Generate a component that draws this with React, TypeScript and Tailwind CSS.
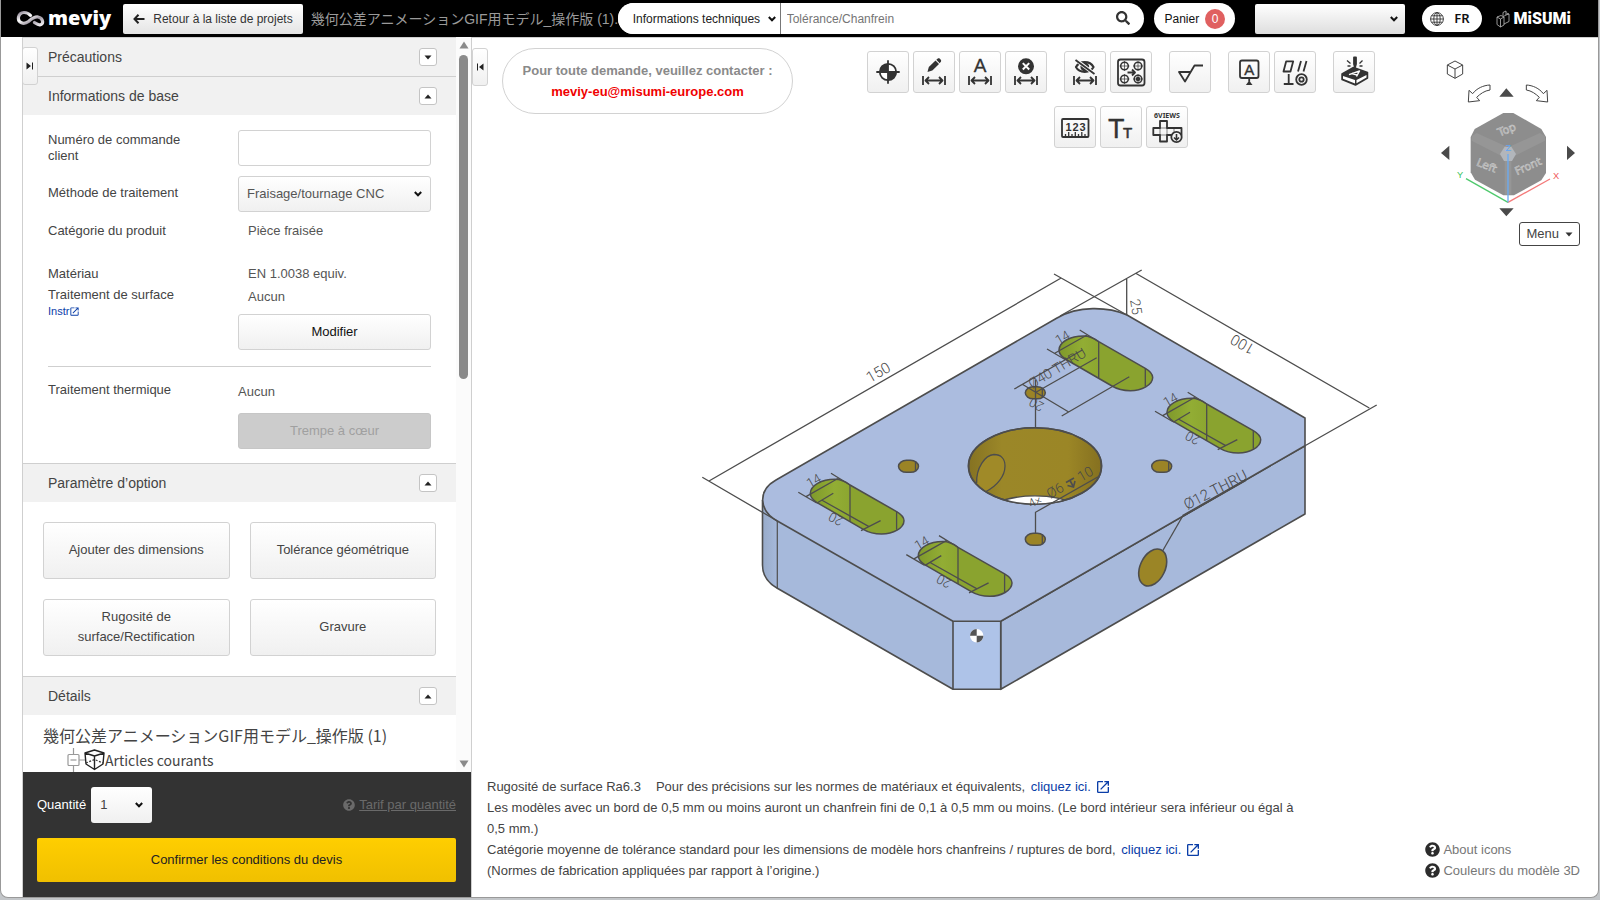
import type { ReactNode } from "react";
import { FaQuestionCircle, FaSearch } from "react-icons/fa";
import { MdOpenInNew } from "react-icons/md";

const MODEL_NAME = "幾何公差アニメーションGIF用モデル_操作版 (1)";

const softButton =
  "rounded-[3px] border border-[#d2d2d2] bg-gradient-to-b from-white to-[#f0f0f0]";

function Chevron({ className }: { className: string }) {
  return (
    <svg
      viewBox="0 0 8 6"
      className={`pointer-events-none col-start-1 row-start-1 h-1.5 w-2 self-center justify-self-end ${className}`}
      fill="none"
      stroke="#111"
      strokeWidth="2"
    >
      <path d="M0.800 1L4 4.300L7.200 1" />
    </svg>
  );
}

function Logo() {
  return (
    <a href="#" aria-label="meviy" className="flex items-center gap-0.5 text-white">
      <svg viewBox="0 0 30 20" className="h-5 w-[30px]" fill="none">
        <defs>
          <linearGradient id="ribbon" x1="0" y1="0" x2="1" y2="1">
            <stop offset="0" stopColor="#8d8593" />
            <stop offset="0.35" stopColor="#ffffff" />
            <stop offset="0.65" stopColor="#a29ba6" />
            <stop offset="1" stopColor="#f4f1f5" />
          </linearGradient>
        </defs>
        <path
          d="M14.500 6.500C11 2.500 4 2 2.500 8C1.500 14 8 16 12.500 12.500C16 9.500 18.500 7.500 22 8C27.500 9 28 15.500 24 15.800C21.500 16 20 14.500 18.500 13.500"
          stroke="url(#ribbon)"
          strokeWidth="3.200"
          strokeLinecap="round"
        />
      </svg>
      <span className="pb-0.5 font-['Open_Sans',sans-serif] text-[20px] leading-7 font-extrabold">meviy</span>
    </a>
  );
}

function MisumiLogo() {
  return (
    <a href="#" aria-label="MiSUMi" className="flex items-center gap-1 text-white">
      <svg viewBox="0 0 14 18" className="h-[18px] w-3.5" fill="none" stroke="#bbb" strokeWidth="0.8">
        <path d="M1 7L5 5.500L8 7V15L4.500 17L1 14.500ZM1 7L4.500 9V17M4.500 9L8 7M7 6V2.500L10 1V5L13 4V11.500L8 14M10 5L7.500 6.500M13 4L10.500 3" />
      </svg>
      <span className="font-[Roboto,sans-serif] text-base leading-5 font-black">MiSUMi</span>
    </a>
  );
}

function Header() {
  return (
    <header className="flex h-[37px] shrink-0 items-center bg-black pr-[27px] pl-[15px]">
      <Logo />
      <button className="ml-3 flex h-[30px] shrink-0 items-center gap-2 rounded-[2px] bg-gradient-to-b from-white to-[#e4e4e4] px-2.5 text-xs text-[#333]">
        <svg viewBox="0 0 12 10" className="h-2.5 w-3" fill="none" stroke="#222" strokeWidth="2">
          <path d="M5.500 0.800L1.500 5L5.500 9.200M1.500 5H11.500" />
        </svg>
        Retour à la liste de projets
      </button>
      <span className="ml-2 w-[307px] shrink-0 overflow-hidden text-sm whitespace-nowrap text-[#9a9a9a]">
        {MODEL_NAME}.
      </span>
      <form className="flex h-[31px] min-w-0 flex-1 items-stretch overflow-hidden rounded-full bg-white">
        <div className="grid w-[163px] shrink-0">
          <select
            aria-label="Catégorie de recherche"
            className="col-start-1 row-start-1 appearance-none border-r border-[#777] bg-white pl-[15px] text-xs text-[#222]"
          >
            <option>Informations techniques</option>
          </select>
          <Chevron className="mr-[5px]" />
        </div>
        <input
          aria-label="Recherche"
          placeholder="Tolérance/Chanfrein"
          className="min-w-0 flex-1 px-1.5 text-xs placeholder:text-[#757575]"
        />
        <button type="button" aria-label="Rechercher" className="px-3.5 pb-0.5">
          <FaSearch className="size-3.5 text-[#333]" />
        </button>
      </form>
      <button className="ml-2.5 flex h-[31px] items-center gap-1.5 rounded-full bg-white px-2.5 text-xs text-[#111]">
        Panier
        <span className="grid size-5 place-items-center rounded-full bg-[#e06060] text-xs text-white">0</span>
      </button>
      <div className="ml-5 grid h-[30px] w-[150px]">
        <select
          aria-label="Compte"
          className="col-start-1 row-start-1 appearance-none rounded-[2px] bg-gradient-to-b from-white to-[#dedede] px-2 text-xs text-[#111]"
        >
          <option> </option>
        </select>
        <Chevron className="mr-[7px]" />
      </div>
      <button className="ml-[17px] flex h-[27px] items-center gap-2.5 rounded-full bg-white px-2 pr-3 font-['Noto_Sans',sans-serif] text-[13px] font-semibold text-[#111]">
        <svg viewBox="0 0 14 14" className="size-3.5" fill="none" stroke="#333" strokeWidth="0.9">
          <circle cx="7" cy="7" r="6.400" />
          <ellipse cx="7" cy="7" rx="3.200" ry="6.400" />
          <path d="M7 0.500V13.500M0.500 7H13.500M1.500 3.800H12.500M1.500 10.200H12.500" />
        </svg>
        FR
      </button>
      <span className="ml-3.5">
        <MisumiLogo />
      </span>
    </header>
  );
}

function SectionHeader({ title, open }: { title: string; open: boolean }) {
  return (
    <div className="flex h-[39px] items-center justify-between border-t border-[#cfcfcf] bg-[#f1f1f1] pr-[19px] pl-[25px]">
      <h2 className="text-sm text-[#444]">{title}</h2>
      <button
        aria-label={title}
        aria-expanded={open}
        className="grid size-[18px] place-items-center rounded-[3px] border border-[#c4c4c4] bg-white"
      >
        <svg viewBox="0 0 8 5" className="h-[5px] w-2" fill="#222">
          <path d={open ? "M0.500 4.500L4 0.500L7.500 4.500Z" : "M0.500 0.500L4 4.500L7.500 0.500Z"} />
        </svg>
      </button>
    </div>
  );
}

function OptionButton({ children }: { children: ReactNode }) {
  return (
    <button className={`${softButton} h-[57px] px-6 pb-0.5 text-[13px] leading-5 text-[#444]`}>{children}</button>
  );
}

function BasicInfo() {
  return (
    <div className="px-[25px] pt-[15px] pb-[14px] text-[13px] leading-4 text-[#444]">
      <div className="grid grid-cols-[190px_1fr]">
        <label htmlFor="order-number" className="max-w-[150px] pt-0.5">
          Numéro de commande client
        </label>
        <input
          id="order-number"
          className="h-9 w-full rounded-[3px] border border-[#d2d2d2] bg-white px-2"
        />
        <label htmlFor="method" className="pt-[19px]">
          Méthode de traitement
        </label>
        <div className="mt-[10px] grid h-9">
          <select
            id="method"
            className={`${softButton} col-start-1 row-start-1 appearance-none px-2 text-[#555]`}
          >
            <option>Fraisage/tournage CNC</option>
          </select>
          <Chevron className="mr-[9px]" />
        </div>
        <span className="pt-[11px]">Catégorie du produit</span>
        <span className="pt-[11px] pl-[10px] text-[#555]">Pièce fraisée</span>
        <div className="pt-[27px]">
          <p>Matériau</p>
          <p className="pt-[5px]">Traitement de surface</p>
          <a href="#" className="flex items-center text-[11px] text-[#0a3ea8]">
            Instr
            <MdOpenInNew className="size-[11px] stroke-current" />
          </a>
        </div>
        <div className="pt-[27px] text-[#555]">
          <p className="pl-[10px]">EN 1.0038 equiv.</p>
          <p className="pt-[7px] pl-[10px]">Aucun</p>
          <button className={`${softButton} mt-[9px] h-9 w-full text-[#111]`}>Modifier</button>
        </div>
      </div>
      <hr className="mt-4 border-[#cfcfcf]" />
      <div className="grid grid-cols-[190px_1fr] pt-[15px]">
        <span>Traitement thermique</span>
        <div className="pt-0.5 text-[#555]">
          <p>Aucun</p>
          <button
            disabled
            className="mt-[13px] h-9 w-full rounded-[3px] border border-[#c6c6c6] bg-[#ccc] text-[#a0a0a0]"
          >
            Trempe à cœur
          </button>
        </div>
      </div>
    </div>
  );
}

function Scrollbar() {
  return (
    <div className="flex w-[15px] shrink-0 flex-col items-center bg-[#fbfbfb] py-1" aria-hidden="true">
      <svg viewBox="0 0 10 8" className="h-2 w-2.5" fill="#8a8a8a">
        <path d="M5 0.500L9.500 7.500H0.500Z" />
      </svg>
      <div className="mt-1.5 h-[44.500%] w-[9px] rounded-full bg-[#8a8a8a]" />
      <svg viewBox="0 0 10 8" className="mt-auto h-2 w-2.5" fill="#8a8a8a">
        <path d="M5 7.500L9.500 0.500H0.500Z" />
      </svg>
    </div>
  );
}

function Sidebar() {
  return (
    <aside className="relative ml-[21px] flex w-[450px] shrink-0 flex-col border-x border-[#cfcfcf]">
      <button
        aria-label="Déplier le panneau"
        className={`${softButton} absolute top-[10px] left-[-1px] z-10 grid h-[38px] w-4 place-items-center`}
      >
        <svg viewBox="0 0 8 8" className="size-2" fill="#222">
          <path d="M0.500 0.500L5 4L0.500 7.500ZM6 0.500H7V7.500H6Z" />
        </svg>
      </button>
      <div className="flex min-h-0 flex-1">
        <div className="min-w-0 flex-1 overflow-hidden">
          <SectionHeader title="Précautions" open={false} />
          <SectionHeader title="Informations de base" open />
          <BasicInfo />
          <SectionHeader title="Paramètre d’option" open />
          <div className="grid grid-cols-2 gap-5 px-5 py-5">
            <OptionButton>Ajouter des dimensions</OptionButton>
            <OptionButton>Tolérance géométrique</OptionButton>
            <OptionButton>Rugosité de surface/Rectification</OptionButton>
            <OptionButton>Gravure</OptionButton>
          </div>
          <SectionHeader title="Détails" open />
          <div className="px-5 pt-2 font-['Noto_Sans_CJK_JP',sans-serif] text-[#444]">
            <p className="text-base leading-6 whitespace-nowrap">{MODEL_NAME}</p>
            <p className="flex items-start pt-px pl-6 text-sm leading-6">
              <svg viewBox="0 0 38 24" className="h-6 w-[38px]" fill="none" stroke="#999" strokeWidth="1.200">
                <path d="M6.500 0V6M6.500 18V24M12 12H18" />
                <rect x="1" y="6.500" width="11" height="11" rx="1" />
                <path d="M3.500 12H9.500" />
                <path
                  d="M18 5L27.500 2L37 5L36 16L27.500 21.500L19 16ZM18 5L27.500 8L37 5M27.500 8V21"
                  stroke="#222"
                  strokeWidth="1.400"
                  strokeLinejoin="round"
                />
                <path d="M19 15L27.500 11.500L36 15" stroke="#333" strokeDasharray="2 1.500" />
              </svg>
              Articles courants
            </p>
          </div>
        </div>
        <Scrollbar />
      </div>
      <div className="flex flex-col gap-[15px] bg-[#333] py-[15px] pr-[15px] pl-[14px]">
        <div className="flex items-center text-[13px]">
          <label htmlFor="quantity" className="text-white">
            Quantité
          </label>
          <div className="ml-[5px] grid h-9 w-[61px]">
            <select
              id="quantity"
              className="col-start-1 row-start-1 appearance-none rounded-[3px] bg-gradient-to-b from-white to-[#f0f0f0] px-[9px] text-[#444]"
            >
              <option>1</option>
            </select>
            <Chevron className="mr-[9px]" />
          </div>
          <a href="#" className="ml-auto flex items-center gap-1 text-[#6a6a6a]">
            <FaQuestionCircle className="size-3" />
            <span className="underline">Tarif par quantité</span>
          </a>
        </div>
        <button className="h-11 rounded-[2px] bg-gradient-to-b from-[#ffce00] to-[#f0c000] text-[13px] text-[#222]">
          Confirmer les conditions du devis
        </button>
      </div>
    </aside>
  );
}

function ToolButton({ label, children }: { label: string; children: ReactNode }) {
  return (
    <button aria-label={label} className={`${softButton} size-[42px]`}>
      <svg
        viewBox="0.500 0.500 40 40"
        className="size-10"
        fill="none"
        stroke="#333"
        strokeWidth="1.800"
        strokeLinejoin="round"
      >
        {children}
      </svg>
    </button>
  );
}

function Span() {
  return <path d="M9.500 24.500V33.500M31.500 24.500V33.500M11.500 29H29.500M15.500 25.500L12 29L15.500 32.500M25.500 25.500L29 29L25.500 32.500" />;
}

function Toolbar() {
  return (
    <div className="flex flex-1 flex-col items-center gap-[13px] pt-[13px] pl-2">
      <div className="flex gap-[17px]">
        <div className="flex gap-1">
          <ToolButton label="Origine">
            <circle cx="20.500" cy="20.500" r="8.200" fill="#fff" />
            <path d="M20.500 8.800V32.200M8.800 20.500H32.200" />
            <path d="M20.500 20.500V12.300A8.200 8.200 0 0 0 12.300 20.500ZM20.500 20.500V28.700A8.200 8.200 0 0 0 28.700 20.500Z" fill="#333" stroke="none" />
          </ToolButton>
          <ToolButton label="Modifier la cote">
            <path d="M14 20.500L15.300 15.500L22 9L25.500 12.500L18.800 19Z" fill="#333" stroke="none" />
            <path d="M22.800 8.200L24.300 7C25.800 6 28.300 8.500 27.500 10L26.200 11.700Z" fill="#333" stroke="none" />
            <Span />
          </ToolButton>
          <ToolButton label="Texte de cote">
            <text x="20.500" y="20.500" textAnchor="middle" className="text-[19px]" fill="#333" strokeWidth="0.300">
              A
            </text>
            <Span />
          </ToolButton>
          <ToolButton label="Supprimer la cote">
            <circle cx="20.500" cy="14.800" r="8" fill="#333" stroke="none" />
            <path d="M17.300 11.600L23.700 18M23.700 11.600L17.300 18" stroke="#fff" strokeWidth="2" />
            <Span />
          </ToolButton>
        </div>
        <div className="flex gap-1">
          <ToolButton label="Masquer les cotes">
            <path d="M11.500 15.500C15 9 25.500 9 29 15.500C25.500 22 15 22 11.500 15.500Z" strokeWidth="2.200" />
            <circle cx="20.300" cy="15.300" r="3.500" fill="#333" />
            <path d="M11.500 8.500L30 22.500" stroke="#f8f8f8" strokeWidth="3.500" />
            <path d="M11 8.500L30 22.500" />
            <Span />
          </ToolButton>
          <ToolButton label="Regrouper les trous">
            <rect x="7.500" y="8" width="26.500" height="26" rx="2.500" />
            <g strokeWidth="1.500">
              <circle cx="14" cy="14.500" r="3.800" />
              <circle cx="27.500" cy="14.500" r="3.800" />
              <circle cx="14" cy="27.500" r="3.800" />
              <circle cx="27.500" cy="27.500" r="3.800" />
              <circle cx="27.500" cy="27.500" r="1.500" fill="#333" />
            </g>
            <path
              d="M9 14.500H19M14 9.500V19.500M22.500 14.500H32.500M27.500 9.500V19.500M9 27.500H19M14 22.500V32.500M22.500 27.500H32.500M27.500 22.500V32.500"
              strokeWidth="0.700"
            />
            <path d="M17 21H24M21.500 18L24.500 21L21.500 24" />
          </ToolButton>
        </div>
        <ToolButton label="Rugosité">
          <path d="M20.500 20.500H9.500L15.500 30L25 14H33.500" />
        </ToolButton>
        <div className="flex gap-1">
          <ToolButton label="Référence">
            <rect x="11.500" y="9" width="18.500" height="17.500" rx="2" />
            <text x="20.800" y="23.300" textAnchor="middle" className="text-[15px]" fill="#333" strokeWidth="0.400">
              A
            </text>
            <path d="M20.700 26.500V30" />
            <path d="M20.700 29L24 33.500H17.400Z" fill="#333" stroke="none" />
          </ToolButton>
          <ToolButton label="Tolérance géométrique">
            <path d="M9 20L11.700 9.800H18.700L16 20ZM23.500 20L26.500 9.500M29 20L32 9.500M9.300 32.500H19M14.200 32.500V22.500" />
            <circle cx="27" cy="28" r="5.300" />
            <circle cx="27" cy="28" r="2.200" />
          </ToolButton>
        </div>
        <ToolButton label="Gravure">
          <path d="M8.500 22.500L20 16L34 21V26.500L22 33.500L8.500 28Z" fill="#333" strokeWidth="1.500" />
          <path d="M9.500 24.500L21.500 28.500V32L9.500 27.300Z" fill="#fff" stroke="none" />
          <path d="M23 28.500L33 23.500V26L23 31.800Z" fill="#fff" stroke="none" />
          <path d="M15.500 23.200L26 19.500L23 25M18.500 22L23.500 23.500" stroke="#fff" strokeWidth="1.400" />
          <path d="M20.500 6V12.500L21.500 16L22.500 12.500V6Z" fill="#333" />
          <path d="M13.500 9L17 12M14 14.500H17M29 9L26 12M29 14.500H26" strokeWidth="1.300" />
        </ToolButton>
      </div>
      <div className="flex gap-1">
        <ToolButton label="Mesurer">
          <rect x="7.500" y="12.500" width="26.500" height="18" rx="1" />
          <g textAnchor="middle" className="text-[11px] font-bold" fill="#333" stroke="none">
            <text x="14" y="24">1</text>
            <text x="21" y="24">2</text>
            <text x="28" y="24">3</text>
          </g>
          <path d="M11 30V27.500M14.200 30V25.500M17.500 30V27.500M20.800 30V25.500M24 30V27.500M27.300 30V25.500M30.500 30V27.500" strokeWidth="1.300" />
        </ToolButton>
        <ToolButton label="Taille du texte">
          <text x="7.500" y="31" className="text-[27px]" fill="#333" strokeWidth="0.300">
            T
          </text>
          <text x="22.500" y="31" className="text-[15px]" fill="#333" strokeWidth="0.600">
            T
          </text>
        </ToolButton>
        <ToolButton label="Six vues">
          <text x="20.500" y="11" textAnchor="middle" className="font-['Noto_Sans',sans-serif] text-[7px] font-bold" fill="#333" stroke="none">
            6VIEWS
          </text>
          <path d="M13.500 14.500H20.500V21.500H35V28.500H20.500V35H13.500V28.500H6.800V21.500H13.500Z" />
          <path d="M13.500 21.500H20.500V28.500H13.500ZM27.500 21.500V28.500" strokeWidth="0.600" />
          <circle cx="30" cy="30.500" r="5.200" fill="#f4f4f4" />
          <path d="M30 27.500V33M27.500 31L30 33.500L32.500 31" strokeWidth="1.600" />
        </ToolButton>
      </div>
    </div>
  );
}

function ViewCube() {
  return (
    <svg viewBox="180 55 420 480" className="h-40 w-[140px]" fill="none" role="img" aria-label="Orientation de la vue">
      <g stroke="#444" strokeWidth="3" strokeLinejoin="round">
        <path d="M225 64L248 76V103L225 116L202 103V76ZM202 76L225 88L248 76M225 88V116" />
        <path d="M265 187L267 152L278 162C290 146 310 137 330 136V151C314 153 300 163 290 173L299 183Z" />
        <path d="M503 187L501 152L490 162C478 146 458 137 439 136V151C454 153 468 163 478 173L469 183Z" />
      </g>
      <g fill="#4a4a4a">
        <path d="M379 146L401 171H358ZM379 530L401 506H358ZM183 340L208 318V361ZM585 340L561 318V361Z" />
      </g>
      <path
        d="M370 220H400L484 268L498 292V400L484 422L402 467H370L285 420L272 398V292L284 268Z"
        fill="#8d8d8d"
      />
      <g fill="#969696">
        <path d="M275 290L290 280L382 322V342L366 350L275 303ZM495 290L480 280L386 322V342L402 350L495 303Z" />
        <path d="M374 345H394V465H374Z" />
      </g>
      <path d="M374 321H394L408 343L396 364H372L360 343Z" fill="#b2b6bb" />
      <g
        fill="#9a9a9a"
        stroke="#cfcfcf"
        strokeWidth="1.500"
        textAnchor="middle"
        className="font-['DejaVu_Sans',sans-serif] text-[33px]"
      >
        <text transform="translate(384 280) rotate(-22)">Top</text>
        <text transform="translate(316 388) rotate(22)">Left</text>
        <text transform="translate(449 390) rotate(-24)">Front</text>
      </g>
      <g strokeWidth="4">
        <path d="M384 488L258 417" stroke="#4fc96d" />
        <path d="M384 488L510 418" stroke="#f47a7a" />
        <path d="M384 488V343" stroke="#6aabf3" />
      </g>
      <g textAnchor="middle" className="text-[28px]">
        <text x="240" y="415" fill="#3cc45c">Y</text>
        <text x="528" y="417" fill="#f05a5a">X</text>
        <text x="385" y="334" fill="#5fa6f5">Z</text>
      </g>
    </svg>
  );
}

const SLOT_PATH =
  "M39.700 5.700L86.300 32.300C91 35 93.700 38 93.700 41.500C93.500 49 83 54.700 71.300 54.700C64 54.700 58 53 53 50L6.300 23C2 20.300 0 17 0 14C0.300 6 11 0 24.700 0C30 0 35.500 2.500 39.700 5.700Z";

function Slot({ x, y, lengthDim = true }: { x: number; y: number; lengthDim?: boolean }) {
  return (
    <g transform={`translate(${x} ${y})`}>
      <path d={SLOT_PATH} fill="#8aa32f" stroke="none" />
      <path
        d="M39.700 5.700V42.500L6.300 23C2 20.300 0 17 0 14C0.300 6 11 0 24.700 0C30 0 35.500 2.500 39.700 5.700Z"
        fill="url(#slotShade)"
        stroke="none"
      />
      <path d={SLOT_PATH} strokeWidth="1.500" />
      <path d="M39.700 5.700V42.500M86.300 32.300V50.500" />
      <path d="M-12 13L6 23.500M20.700 -6L39.700 5.700M-4.300 17.300L28 -1" />
      <text transform="translate(-0.500 9) rotate(-30)" className="text-[13px]">14</text>
      {lengthDim && (
        <>
          <path d="M11.300 20.700L58.700 47.300M6.300 24L23 14M50.700 51.300L70.300 41.300" />
          <text transform="translate(34 39) rotate(208)" className="text-[13px]">20</text>
        </>
      )}
    </g>
  );
}

function SmallHole({ x, y }: { x: number; y: number }) {
  return (
    <g transform={`translate(${x} ${y})`}>
      <rect x="-10" y="-6" width="20" height="12" rx="8" ry="6" fill="#9b8426" strokeWidth="1.500" />
      <path d="M7 -5V5" />
    </g>
  );
}

function Model() {
  return (
    <svg
      viewBox="690 262 700 440"
      className="h-[440px] w-[700px] font-[Roboto,sans-serif] font-light [&_text]:fill-[#484848] [&_text]:stroke-none"
      fill="none"
      stroke="#4d4d4d"
      strokeWidth="1.300"
      role="img"
      aria-label="Modèle 3D"
    >
      <defs>
        <linearGradient id="slotShade">
          <stop offset="0" stopColor="#7f992b" />
          <stop offset="0.600" stopColor="#92ad34" />
          <stop offset="1" stopColor="#8ca630" />
        </linearGradient>
        <linearGradient id="bore">
          <stop offset="0" stopColor="#857222" />
          <stop offset="0.250" stopColor="#9b8728" />
          <stop offset="0.750" stopColor="#9b8626" />
          <stop offset="1" stopColor="#857020" />
        </linearGradient>
        <linearGradient id="corner">
          <stop offset="0" stopColor="#98abc9" />
          <stop offset="1" stopColor="#a6b9db" />
        </linearGradient>
        <clipPath id="boreClip">
          <ellipse cx="1035" cy="466" rx="66.500" ry="38.200" />
        </clipPath>
      </defs>

      <g strokeLinejoin="round" strokeWidth="1.600">
        <path d="M762.500 500V565C762.500 575 768 583 777.300 588.300V521Z" fill="url(#corner)" stroke="none" />
        <path d="M777.300 521L953 621.300V689.300L777.300 588.300Z" fill="#a6b9db" stroke="none" />
        <path d="M762.500 500V565C762.500 575 768 583 777.300 588.300L953 689.300" />
        <path d="M777.300 521V588.300" strokeWidth="1.200" />
        <path d="M1000.700 621.300L1305 445.700V514L1000.700 689.300Z" fill="#a7b9db" />
        <path d="M953 621.300H1000.700V689.300H953Z" fill="#aec3e8" />
        <path
          d="M777.300 521C758 510 758 490 776 480L1057 318C1078 305.500 1108 306.500 1127 315L1305 418V445.700L1000.700 621.300H953Z"
          fill="#abbcdf"
        />
      </g>

      <path d="M709 481L1060.700 278.300M702.300 477.300L777.300 521M1054 274L1127 315" />
      <path d="M1135.700 273.300L1369.300 408M1141.700 270L1060 316M1376.700 405L1305 445.700M1126.700 278V315" />
      <text transform="translate(870 383) rotate(-30)" className="text-[15px]">150</text>
      <text transform="translate(1256 346) rotate(210)" className="text-[15px]">100</text>
      <text transform="translate(1130 300) rotate(80)" className="text-[14px]">25</text>

      <Slot x={810.3} y={479.3} />
      <Slot x={918.3} y={541.6} />
      <Slot x={1059} y={336} lengthDim={false} />
      <Slot x={1167} y={398.3} />

      <ellipse cx="1035" cy="466" rx="66.500" ry="38.200" fill="url(#bore)" strokeWidth="1.600" />
      <g clipPath="url(#boreClip)">
        <ellipse cx="1035" cy="534" rx="66.500" ry="38.200" fill="#fff" />
        <path d="M976.700 483C976 468 985 455 994 454.500C1001 454.500 1005 459 1005 466C1005 476 997 486 986 491.500" fill="#a08a28" />
      </g>
      <ellipse cx="1035" cy="466" rx="66.500" ry="38.200" strokeWidth="1.600" />

      <SmallHole x={908.5} y={466.3} />
      <SmallHole x={1161.7} y={466.3} />
      <SmallHole x={1035.3} y={539.3} />
      <SmallHole x={1035.3} y={392.8} />

      <path d="M1014.300 389L1082.300 350M1035.500 392.500L1096.700 357.700M1061.700 416L1129.300 376.700M1022.300 384.300L1068.300 411.700M1035.500 380V427.500" />
      <text transform="translate(1032 389) rotate(-31)" className="text-[14px]">Ø40 THRU</text>
      <text transform="translate(1045 404) rotate(210)" className="text-[13px]">20</text>

      <path d="M1035.500 533V512.300L1099.500 476" />
      <text transform="translate(1031 508) rotate(-28)" className="text-[12px]">4×</text>
      <text transform="translate(1050 499) rotate(-30)" className="text-[14px]">Ø6</text>
      <path d="M1066 482.500L1074 478M1070 480.500L1073 486M1067.500 485.500L1073.500 487L1075 481" strokeWidth="1.600" />
      <text transform="translate(1081 482) rotate(-30)" className="text-[14px]">10</text>

      <ellipse cx="1152.700" cy="567.500" rx="12.500" ry="19.500" transform="rotate(25 1152.700 567.500)" fill="#9b8526" strokeWidth="1.600" />
      <path d="M1162.700 550.700L1182.700 516" />
      <path d="M1182.700 516L1245.700 480" strokeWidth="2.200" />
      <text transform="translate(1187 510) rotate(-27)" className="text-[15px]">Ø12 THRU</text>

      <g stroke="none">
        <circle cx="976.700" cy="635.700" r="6.700" fill="#fff" />
        <path d="M976.700 635.700V629A6.700 6.700 0 0 0 970 635.700ZM976.700 635.700V642.400A6.700 6.700 0 0 0 983.400 635.700Z" fill="#555" />
      </g>
    </svg>
  );
}

function NoteLink() {
  return (
    <a href="#" className="ml-0.5 inline-flex items-center gap-1 text-[#0a3ea8]">
      cliquez ici.
      <MdOpenInNew className="size-4 stroke-current" />
    </a>
  );
}

function Viewer() {
  return (
    <main className="relative flex min-w-0 flex-1 flex-col border-t border-[#cfcfcf]">
      <button
        aria-label="Replier le panneau"
        className={`${softButton} absolute top-[10px] left-0 grid h-[38px] w-4 place-items-center`}
      >
        <svg viewBox="0 0 8 8" className="size-2" fill="#222">
          <path d="M7.500 0.500L3 4L7.500 7.500ZM1 0.500H2V7.500H1Z" />
        </svg>
      </button>
      <div className="flex items-start pr-[18px] pl-[30px]">
        <div className="mt-2.5 flex h-[66px] w-[291px] flex-col justify-center rounded-full border border-[#d2d2d2] text-center text-[13px] leading-[21px] font-bold">
          <p className="text-[#8a8a8a]">Pour toute demande, veuillez contacter :</p>
          <a href="mailto:meviy-eu@misumi-europe.com" className="text-[#f00000]">
            meviy-eu@misumi-europe.com
          </a>
        </div>
        <Toolbar />
        <div className="flex flex-col items-end pt-5">
          <ViewCube />
          <button className="mt-1 flex h-6 items-center gap-1.5 rounded-[3px] border border-[#444] bg-white px-1.5 text-[13px] text-[#444]">
            Menu
            <svg viewBox="0 0 8 5" className="h-[5px] w-2" fill="#333">
              <path d="M0.500 0.500H7.500L4 4.500Z" />
            </svg>
          </button>
        </div>
      </div>
      <div className="flex flex-1 justify-center pt-4 pl-2.5">
        <Model />
      </div>
      <div className="flex items-end justify-between pr-[18px] pb-4 pl-[15px] text-[13px] leading-[21px] text-[#444]">
        <div className="max-w-[820px]">
          <p>
            Rugosité de surface Ra6.3
            <span className="ml-[15px]">Pour des précisions sur les normes de matériaux et équivalents, </span>
            <NoteLink />
          </p>
          <p>
            Les modèles avec un bord de 0,5 mm ou moins auront un chanfrein fini de 0,1 à 0,5 mm ou moins. (Le bord
            intérieur sera inférieur ou égal à 0,5 mm.)
          </p>
          <p>
            Catégorie moyenne de tolérance standard pour les dimensions de modèle hors chanfreins / ruptures de bord,{" "}
            <NoteLink />
          </p>
          <p>(Normes de fabrication appliquées par rapport à l’origine.)</p>
        </div>
        <div className="flex flex-col text-[#777]">
          <a href="#" className="flex items-center gap-[3px]">
            <FaQuestionCircle className="size-[15px] text-[#2c2c2c]" />
            About icons
          </a>
          <a href="#" className="flex items-center gap-[3px]">
            <FaQuestionCircle className="size-[15px] text-[#2c2c2c]" />
            Couleurs du modèle 3D
          </a>
        </div>
      </div>
    </main>
  );
}

export default function App() {
  return (
    <div className="flex h-screen flex-col bg-[#c3c6c9] pr-px pb-0.5 font-['Liberation_Sans','Noto_Sans_CJK_JP',sans-serif]">
      <div className="flex min-h-0 flex-1 flex-col overflow-hidden rounded-b-lg border-x border-b border-[#999] bg-white">
        <Header />
        <div className="flex min-h-0 flex-1">
          <Sidebar />
          <Viewer />
        </div>
      </div>
    </div>
  );
}
